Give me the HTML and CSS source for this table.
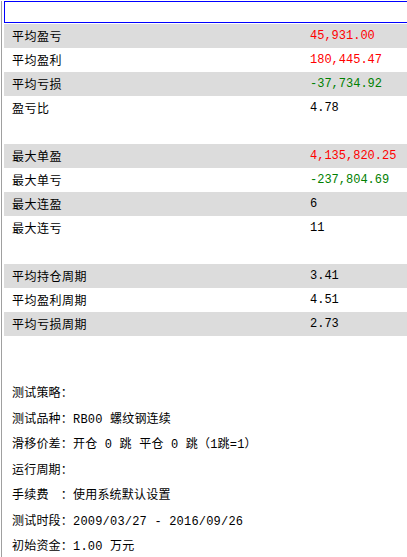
FILE: index.html
```html
<!DOCTYPE html>
<html lang="zh">
<head>
<meta charset="utf-8">
<link rel="stylesheet" href="styles.css">
</head>
<body>
<div class="frame">
  <div class="titlebox"></div>
  <div class="table">
    <div class="row alt"><span class="label">平均盈亏</span><span class="val red">45,931.00</span></div>
    <div class="row"><span class="label">平均盈利</span><span class="val red">180,445.47</span></div>
    <div class="row alt"><span class="label">平均亏损</span><span class="val green">-37,734.92</span></div>
    <div class="row"><span class="label">盈亏比</span><span class="val">4.78</span></div>
    <div class="row blank"></div>
    <div class="row alt"><span class="label">最大单盈</span><span class="val red">4,135,820.25</span></div>
    <div class="row"><span class="label">最大单亏</span><span class="val green">-237,804.69</span></div>
    <div class="row alt"><span class="label">最大连盈</span><span class="val">6</span></div>
    <div class="row"><span class="label">最大连亏</span><span class="val">11</span></div>
    <div class="row blank"></div>
    <div class="row alt"><span class="label">平均持仓周期</span><span class="val">3.41</span></div>
    <div class="row"><span class="label">平均盈利周期</span><span class="val">4.51</span></div>
    <div class="row alt"><span class="label">平均亏损周期</span><span class="val">2.73</span></div>
  </div>
  <div class="info">
    <div class="line">测试策略：</div>
    <div class="line">测试品种：RB00 螺纹钢连续</div>
    <div class="line">滑移价差：开仓 0 跳 平仓 0 跳（1跳=1）</div>
    <div class="line">运行周期：</div>
    <div class="line">手续费　：使用系统默认设置</div>
    <div class="line">测试时段：2009/03/27 - 2016/09/26</div>
    <div class="line">初始资金：1.00 万元</div>
  </div>
</div>
</body>
</html>
```

FILE: styles.css
```css
html, body {
  margin: 0;
  padding: 0;
  background: #ffffff;
}
body {
  font-family: "Liberation Mono", "Noto Sans CJK SC", monospace;
  font-size: 12px;
  color: #000000;
}
.frame {
  margin-left: 1px;
  border-left: 1px solid #a0a0a0;
  padding-left: 2px;
  min-height: 557px;
  box-sizing: border-box;
}
.titlebox {
  margin-top: 1px;
  height: 20px;
  border: 1px solid #0000ff;
  border-right: none;
  margin-bottom: 1px;
}
.table {
  display: flex;
  flex-direction: column;
}
.row {
  height: 24px;
  display: flex;
  align-items: center;
  padding-left: 8px;
}
.row.alt {
  background: #dcdcdc;
}
.label {
  width: 298px;
  letter-spacing: 0.5px;
}
.val {
  white-space: pre;
}
.red { color: #ff0000; }
.green { color: #008000; }
.info {
  padding-top: 46px;
  padding-left: 8px;
}
.line {
  height: 25.5px;
  line-height: 25.5px;
  letter-spacing: 0.2px;
  white-space: pre;
}
```
